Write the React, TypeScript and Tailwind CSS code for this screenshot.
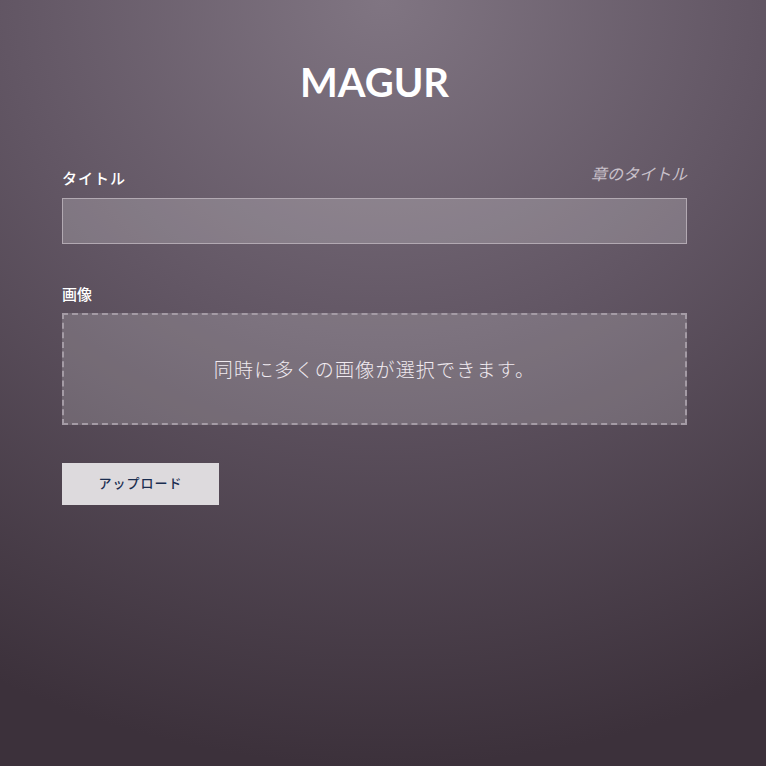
export default function App() {
  return (
    <div
      className="min-h-[766px] w-full bg-[radial-gradient(ellipse_110%_100%_at_50%_0%,#807582_0%,#625664_45%,#3c313b_100%)] font-['Lato','Noto_Sans_CJK_JP',sans-serif]"
    >
      <div className="ml-[62px] w-[625px] pt-[60px]">
        <h1 className="text-center text-[40px] font-bold leading-[44px] text-white">
          MAGUR
        </h1>

        <div className="mt-[60px] flex items-end justify-between">
          <label className="text-[15px] font-medium leading-[20px] tracking-[1px] text-white">
            タイトル
          </label>
          <span className="mb-[4px] text-[16px] italic leading-[20px] text-[#c9c1ca]">
            章のタイトル
          </span>
        </div>
        <input
          type="text"
          className="mt-[10px] block h-[46px] w-full border border-[#b2a9b2] bg-white/20 px-3 text-white outline-none"
        />

        <label className="mt-[40px] block text-[15px] font-medium leading-[20px] text-white">
          画像
        </label>
        <div className="mt-[9px] flex h-[112px] w-full items-center justify-center border-2 border-dashed border-[#a49ba5] bg-white/[0.17]">
          <span className="pt-[2px] text-[19px] font-light tracking-[1.2px] text-[#f0eaf0]">
            同時に多くの画像が選択できます。
          </span>
        </div>

        <button className="mt-[38px] flex h-[42px] w-[157px] items-center justify-center bg-[#dddadd] text-[13px] font-medium tracking-[1px] text-[#1a2d50]">
          アップロード
        </button>
      </div>
    </div>
  );
}
